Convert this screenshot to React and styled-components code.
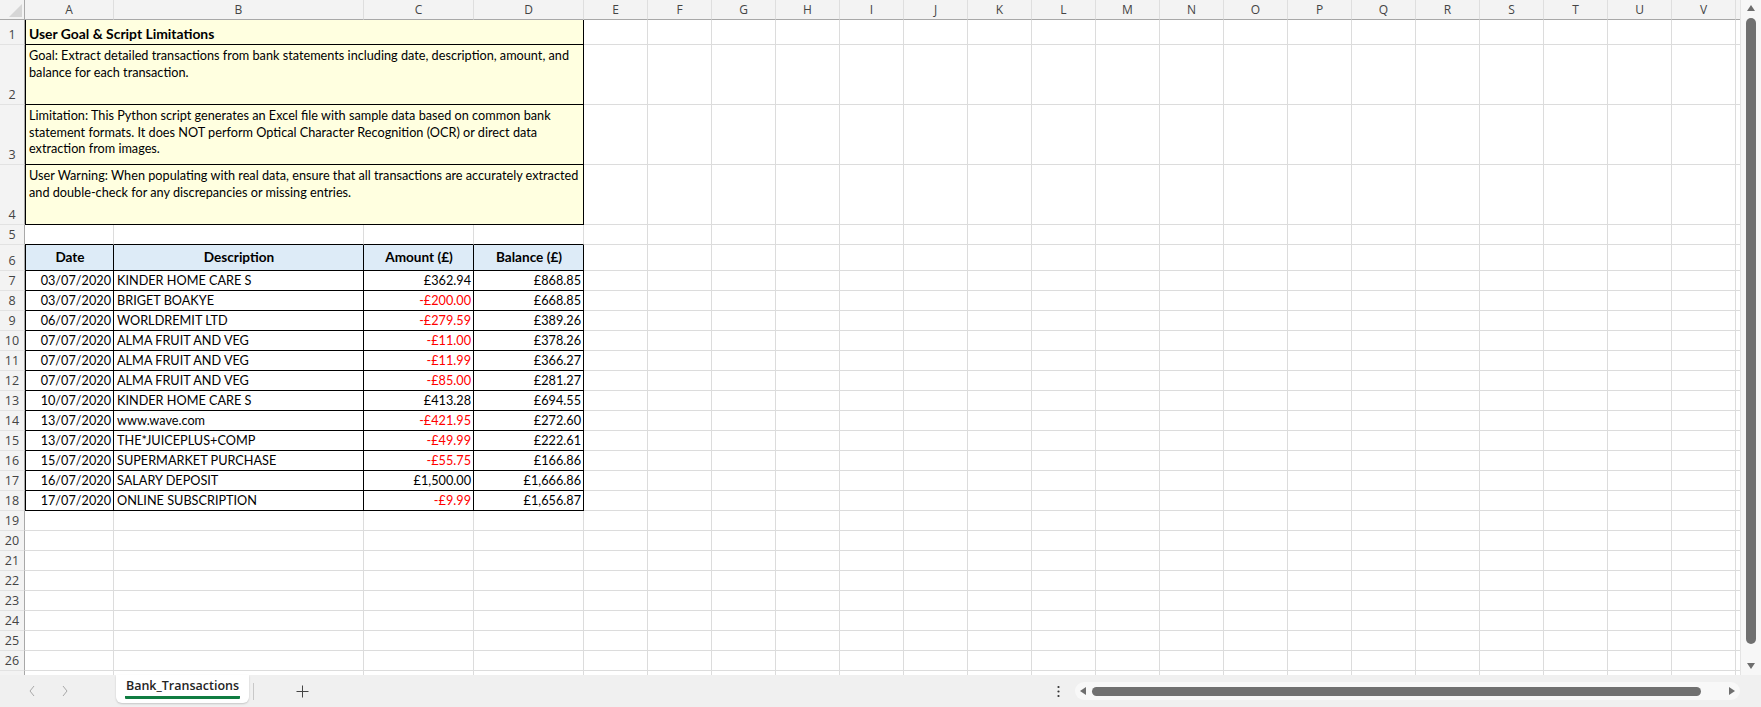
import React from "react";
import styled, { createGlobalStyle } from "styled-components";

const GlobalStyle = createGlobalStyle`
  html, body {
    margin: 0;
    padding: 0;
    background: #ffffff;
    overflow: hidden;
  }
  body {
    font-family: "Open Sans", "Noto Sans", sans-serif;
  }
`;

const COLUMNS = "ABCDEFGHIJKLMNOPQRSTUVW".split("");
const COL_WIDTHS = [89, 250, 110, 110, ...Array(19).fill(64)];
const ROW_HEIGHTS = { 1: 25, 2: 60, 3: 60, 4: 60, 6: 26 };
const ROW_COUNT = 27;
const VISIBLE_ROWS = 26;
const VISIBLE_COLS = 22;
const GRID = "#dcdcdc";
const BLACK = "#000000";
const NOTE_FILL = "#ffffe0";
const HEAD_FILL = "#ddebf7";

const notes = [
  { bold: true, lines: ["User Goal & Script Limitations"] },
  {
    lines: [
      "Goal: Extract detailed transactions from bank statements including date, description, amount, and",
      "balance for each transaction.",
    ],
  },
  {
    lines: [
      "Limitation: This Python script generates an Excel file with sample data based on common bank",
      "statement formats. It does NOT perform Optical Character Recognition (OCR) or direct data",
      "extraction from images.",
    ],
  },
  {
    lines: [
      "User Warning: When populating with real data, ensure that all transactions are accurately extracted",
      "and double-check for any discrepancies or missing entries.",
    ],
  },
];

const headers = ["Date", "Description", "Amount (£)", "Balance (£)"];

const transactions = [
  ["03/07/2020", "KINDER HOME CARE S", "£362.94", "£868.85"],
  ["03/07/2020", "BRIGET BOAKYE", "-£200.00", "£668.85"],
  ["06/07/2020", "WORLDREMIT LTD", "-£279.59", "£389.26"],
  ["07/07/2020", "ALMA FRUIT AND VEG", "-£11.00", "£378.26"],
  ["07/07/2020", "ALMA FRUIT AND VEG", "-£11.99", "£366.27"],
  ["07/07/2020", "ALMA FRUIT AND VEG", "-£85.00", "£281.27"],
  ["10/07/2020", "KINDER HOME CARE S", "£413.28", "£694.55"],
  ["13/07/2020", "www.wave.com", "-£421.95", "£272.60"],
  ["13/07/2020", "THE*JUICEPLUS+COMP", "-£49.99", "£222.61"],
  ["15/07/2020", "SUPERMARKET PURCHASE", "-£55.75", "£166.86"],
  ["16/07/2020", "SALARY DEPOSIT", "£1,500.00", "£1,666.86"],
  ["17/07/2020", "ONLINE SUBSCRIPTION", "-£9.99", "£1,656.87"],
];

const Window = styled.div`
  width: 1761px;
  height: 707px;
  display: grid;
  grid-template-columns: minmax(0, 1fr);
  grid-template-rows: 675px 32px;
  background: #f0f0f0;
  overflow: hidden;
`;

const Workspace = styled.div`
  display: flex;
  min-height: 0;
  min-width: 0;
`;

const Viewport = styled.div`
  flex: 1;
  min-width: 0;
  overflow: hidden;
  background: #ffffff;
`;

const Sheet = styled.div`
  display: grid;
  grid-template-columns: 25px ${COL_WIDTHS.map((w) => `${w}px`).join(" ")};
  grid-template-rows: 20px ${Array.from({ length: ROW_COUNT }, (_, i) => `${ROW_HEIGHTS[i + 1] || 20}px`).join(" ")};
`;

const Corner = styled.div`
  background: #f3f3f3;
  border-right: 1px solid #a8a8a8;
  border-bottom: 1px solid #a8a8a8;
  box-sizing: border-box;
  display: flex;
  align-items: flex-end;
  justify-content: flex-end;
  padding: 0 2px 2px 0;
`;

const ColHeader = styled.div`
  box-sizing: border-box;
  background: #f3f3f3;
  border-right: 1px solid #dedede;
  border-bottom: 1px solid #a8a8a8;
  display: flex;
  align-items: center;
  justify-content: center;
  font-family: "Open Sans", sans-serif;
  font-size: 12px;
  color: #444444;
  line-height: 1;
`;

const RowHeader = styled.div`
  box-sizing: border-box;
  background: #f3f3f3;
  border-right: 1px solid #a8a8a8;
  border-bottom: 1px solid #e2e2e2;
  display: flex;
  align-items: flex-end;
  justify-content: center;
  padding-bottom: 1px;
  font-family: "Open Sans", sans-serif;
  font-size: 12.5px;
  line-height: 16px;
  color: #444444;
`;

const Cell = styled.div`
  box-sizing: border-box;
  grid-column: span ${(p) => p.$span || 1};
  min-width: 0;
  display: flex;
  flex-direction: column;
  justify-content: ${(p) =>
    p.$valign === "top" ? "flex-start" : p.$valign === "center" ? "center" : "flex-end"};
  align-items: ${(p) =>
    p.$align === "right" ? "flex-end" : p.$align === "center" ? "center" : "flex-start"};
  padding: ${(p) => (p.$valign === "top" ? "2px 3px 0 3px" : "0 2px 1px 3px")};
  background: ${(p) => p.$fill || "#ffffff"};
  border-right: 1px solid ${(p) => p.$br || GRID};
  border-bottom: 1px solid ${(p) => p.$bb || GRID};
  border-left: ${(p) => (p.$bl ? `1px solid ${p.$bl}` : "none")};
  font-family: Lato, "Open Sans", sans-serif;
  font-size: ${(p) => p.$size || 12.7}px;
  font-weight: ${(p) => (p.$bold ? 700 : 400)};
  color: ${(p) => p.$color || "#000000"};
  line-height: 16.7px;
  white-space: nowrap;
  overflow: visible;
`;

const Line = styled.span`
  display: block;
`;

const VScroll = styled.div`
  flex: none;
  width: 21px;
  background: #f7f7f7;
  border-left: 1px solid #e4e4e4;
  box-sizing: border-box;
  display: flex;
  flex-direction: column;
  align-items: center;
  padding: 4px 0 5px;
  gap: 6px;
`;

const VThumb = styled.div`
  width: 10px;
  height: 626px;
  border-radius: 5px;
  background: #707070;
`;

const VSpacer = styled.div`
  flex: 1;
`;

const BottomBar = styled.div`
  display: flex;
  align-items: center;
  min-width: 0;
  background: #f0f0f0;
  font-family: "Open Sans", sans-serif;
`;

const NavButtons = styled.div`
  width: 116px;
  display: flex;
  align-items: center;
  padding-left: 28px;
  box-sizing: border-box;
  gap: 25px;
  color: #a8a8a8;
`;

const SheetTab = styled.div`
  align-self: flex-start;
  height: 28px;
  width: 133px;
  box-sizing: border-box;
  background: #ffffff;
  border-radius: 0 0 6px 6px;
  box-shadow: 0 1px 2px rgba(0, 0, 0, 0.18);
  display: flex;
  flex-direction: column;
  align-items: center;
  justify-content: flex-end;
  padding-bottom: 4px;
`;

const TabLabel = styled.span`
  font-size: 12.5px;
  font-weight: 600;
  color: #242424;
  line-height: 18px;
  border-bottom: 3px solid #107c41;
  border-radius: 1px;
  padding: 0 1px 1px;
`;

const TabDivider = styled.div`
  width: 1px;
  height: 17px;
  background: #c8c8c8;
  margin-left: 4px;
`;

const AddButton = styled.div`
  margin-left: 42px;
  display: flex;
  align-items: center;
`;

const BarSpacer = styled.div`
  flex: 1;
`;

const MoreButton = styled.div`
  width: 17px;
  display: flex;
  justify-content: center;
  margin-right: 8px;
`;

const HTrack = styled.div`
  flex: none;
  width: 665px;
  height: 18px;
  border-radius: 9px;
  background: #f8f8f8;
  display: flex;
  align-items: center;
  padding: 0 4px;
  box-sizing: border-box;
  margin-right: 21px;
`;

const HThumb = styled.div`
  width: 609px;
  height: 9px;
  border-radius: 4.5px;
  background: #707070;
  margin-left: 5px;
`;

const HSpace = styled.div`
  flex: 1;
`;

const Arrow = ({ dir }) => {
  const pts = {
    up: "0,7 4,1 8,7",
    down: "0,1 4,7 8,1",
    left: "7,0 1,4 7,8",
    right: "1,0 7,4 1,8",
  }[dir];
  return (
    <svg width="8" height="8" viewBox="0 0 8 8">
      <polygon points={pts} fill="#6e6e6e" />
    </svg>
  );
};

const Chevron = ({ flip }) => (
  <svg width="8" height="12" viewBox="0 0 8 12">
    <polyline
      points={flip ? "2,1 6,6 2,11" : "6,1 2,6 6,11"}
      fill="none"
      stroke="currentColor"
      strokeWidth="1"
    />
  </svg>
);

function noteCell(r) {
  const note = notes[r - 1];
  return (
    <Cell
      key={`note-${r}`}
      $span={4}
      $fill={NOTE_FILL}
      $br={BLACK}
      $bb={BLACK}
      $bl={BLACK}
      $bold={note.bold}
      $size={note.bold ? 13.9 : 12.7}
      $valign={note.bold ? "bottom" : "top"}
    >
      {note.lines.map((l) => (
        <Line key={l}>{l}</Line>
      ))}
    </Cell>
  );
}

function tableCell(r, c) {
  const bordered = { $br: BLACK, $bb: BLACK, $bl: c === 0 ? BLACK : undefined };
  if (r === 6) {
    return (
      <Cell key={`${r}-${c}`} {...bordered} $fill={HEAD_FILL} $bold $size={13.6} $align="center" $valign="center">
        {headers[c]}
      </Cell>
    );
  }
  const value = transactions[r - 7][c];
  const negative = value.startsWith("-");
  return (
    <Cell
      key={`${r}-${c}`}
      {...bordered}
      $align={c === 1 ? "left" : "right"}
      $color={negative ? "#ff0000" : undefined}
    >
      {value}
    </Cell>
  );
}

function renderRow(r) {
  const cells = [<RowHeader key={`rh-${r}`}>{r <= VISIBLE_ROWS ? r : ""}</RowHeader>];
  let start = 0;
  if (r >= 1 && r <= 4) {
    cells.push(noteCell(r));
    start = 4;
  } else if (r >= 6 && r <= 18) {
    for (let c = 0; c < 4; c++) cells.push(tableCell(r, c));
    start = 4;
  }
  for (let c = start; c < COLUMNS.length; c++) {
    cells.push(<Cell key={`${r}-${c}`} $bb={r === 5 && c < 4 ? BLACK : undefined} />);
  }
  return cells;
}

export default function App() {
  return (
    <>
      <GlobalStyle />
      <Window>
        <Workspace>
          <Viewport>
            <Sheet>
              <Corner>
                <svg width="13" height="13" viewBox="0 0 13 13">
                  <polygon points="13,0 13,13 0,13" fill="#d6d6d6" />
                </svg>
              </Corner>
              {COLUMNS.map((c, i) => (
                <ColHeader key={c}>{i < VISIBLE_COLS ? c : ""}</ColHeader>
              ))}
              {Array.from({ length: ROW_COUNT }, (_, i) => renderRow(i + 1))}
            </Sheet>
          </Viewport>
          <VScroll>
            <Arrow dir="up" />
            <VThumb />
            <VSpacer />
            <Arrow dir="down" />
          </VScroll>
        </Workspace>
        <BottomBar>
          <NavButtons>
            <Chevron />
            <Chevron flip />
          </NavButtons>
          <SheetTab>
            <TabLabel>Bank_Transactions</TabLabel>
          </SheetTab>
          <TabDivider />
          <AddButton>
            <svg width="13" height="13" viewBox="0 0 13 13">
              <path d="M6.5 0.5v12M0.5 6.5h12" stroke="#444" strokeWidth="1" />
            </svg>
          </AddButton>
          <BarSpacer />
          <MoreButton>
            <svg width="3" height="13" viewBox="0 0 3 13">
              <circle cx="1.5" cy="2" r="1.1" fill="#333" />
              <circle cx="1.5" cy="6.5" r="1.1" fill="#333" />
              <circle cx="1.5" cy="11" r="1.1" fill="#333" />
            </svg>
          </MoreButton>
          <HTrack>
            <Arrow dir="left" />
            <HThumb />
            <HSpace />
            <Arrow dir="right" />
          </HTrack>
        </BottomBar>
      </Window>
    </>
  );
}
